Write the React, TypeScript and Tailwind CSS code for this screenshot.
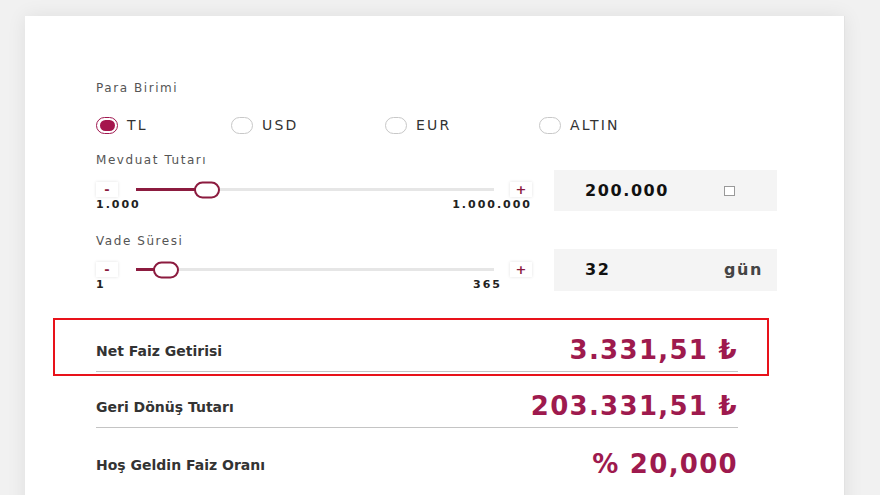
import React, { useState } from 'react';

const MAROON = '#9e1a4e';

function Radio({ label, checked, onClick, width }: { label: string; checked: boolean; onClick: () => void; width: string }) {
  return (
    <button type="button" onClick={onClick} className={`flex items-center gap-[9px] h-5 ${width}`}>
      <span
        className={
          checked
            ? 'w-[22px] h-[17px] rounded-full border-[1.5px] border-[#a0174f] flex items-center justify-center'
            : 'w-[22px] h-[17px] rounded-full border border-[#c8c8c8] bg-white'
        }
      >
        {checked && <span className="w-[15px] h-[11px] rounded-full bg-[#a5154d]" />}
      </span>
      <span className="text-[14px] tracking-[0.16em] text-[#333]">{label}</span>
    </button>
  );
}

function StepButton({ sign }: { sign: string }) {
  return (
    <span className="w-[22px] h-[15px] flex items-center justify-center bg-white shadow-[0_0_3px_rgba(0,0,0,0.12)] text-[13px] font-bold leading-none text-[#8c1b3f]">
      {sign}
    </span>
  );
}

function Slider({
  min,
  max,
  value,
  minLabel,
  maxLabel,
  maxPad,
}: {
  min: number;
  max: number;
  value: number;
  minLabel: string;
  maxLabel: string;
  maxPad: string;
}) {
  const pct = ((value - min) / (max - min)) * 100;
  return (
    <div className="w-[436px]">
      <div className="flex items-center h-[15px]">
        <StepButton sign="-" />
        <div className="relative flex-1 ml-[18px] mr-[16px] h-[3px] bg-[#e6e6e6]">
          <div className="absolute left-0 top-0 h-[3px] bg-[#8c1b3f]" style={{ width: `${pct}%` }} />
          <span
            className="absolute top-1/2 -translate-x-1/2 -translate-y-1/2 w-[26px] h-[17px] rounded-full border-2 border-[#8c1b3f] bg-white"
            style={{ left: `${pct}%` }}
          />
        </div>
        <StepButton sign="+" />
      </div>
      <div className={`flex justify-between mt-[1px] h-[14px] items-center text-[11px] font-bold tracking-[0.18em] text-[#222] ${maxPad}`}>
        <span>{minLabel}</span>
        <span>{maxLabel}</span>
      </div>
    </div>
  );
}

function ResultRow({ label, value, line }: { label: string; value: string; line: boolean }) {
  return (
    <div>
      <div className="flex items-center justify-between h-[30px]">
        <span className="text-[14px] font-bold text-[#333] pt-[2px]">{label}</span>
        <span className="text-[26px] font-bold tracking-[0.05em] leading-[30px]" style={{ color: MAROON }}>
          {value}
        </span>
      </div>
      {line && <div className="mt-[6px] h-px bg-[#c4c4c4]" />}
    </div>
  );
}

const OPTIONS: { c: string; w: string }[] = [
  { c: 'TL', w: 'w-[135px]' },
  { c: 'USD', w: 'w-[154px]' },
  { c: 'EUR', w: 'w-[154px]' },
  { c: 'ALTIN', w: 'w-[154px]' },
];

export default function App() {
  const [currency, setCurrency] = useState('TL');

  return (
    <div className="min-h-screen bg-[#f1f1f1] overflow-hidden font-['DejaVu_Sans',sans-serif]">
      <div className="ml-[25px] mt-[16px] w-[820px] h-[600px] bg-white border-r border-[#e2e2e2] shadow-[0_0_18px_rgba(0,0,0,0.08)] pt-[64px] pl-[71px]">
        <div className="h-4 leading-4 text-[12px] tracking-[0.13em] text-[#555]">Para Birimi</div>

        <div className="mt-[19px] flex">
          {OPTIONS.map(({ c, w }) => (
            <Radio key={c} label={c} width={w} checked={currency === c} onClick={() => setCurrency(c)} />
          ))}
        </div>

        <div className="mt-[17px] h-4 leading-4 text-[12px] tracking-[0.13em] text-[#555]">Mevduat Tutarı</div>
        <div className="mt-[2px] flex items-start gap-[22px]">
          <div className="pt-[12px]">
            <Slider min={1000} max={1000000} value={200000} minLabel="1.000" maxLabel="1.000.000" maxPad="pr-0" />
          </div>
          <div className="w-[223px] h-[41px] bg-[#f4f4f4] flex items-center justify-between pl-[31px] pr-[42px]">
            <span className="text-[16px] font-bold tracking-[0.1em] text-[#111]">200.000</span>
            <span className="w-[11px] h-[10px] border border-[#999] bg-white" />
          </div>
        </div>

        <div className="mt-[21px] h-4 leading-4 text-[12px] tracking-[0.13em] text-[#555]">Vade Süresi</div>
        <div className="flex items-start gap-[22px]">
          <div className="pt-[13px]">
            <Slider min={1} max={365} value={32} minLabel="1" maxLabel="365" maxPad="pr-[30px]" />
          </div>
          <div className="w-[223px] h-[42px] bg-[#f4f4f4] flex items-center justify-between pl-[31px] pr-[14px]">
            <span className="text-[16px] font-bold tracking-[0.1em] text-[#111]">32</span>
            <span className="text-[16px] font-bold tracking-[0.1em] text-[#444]">gün</span>
          </div>
        </div>

        <div className="mt-[26px] -ml-[43px] w-[716px] border-2 border-[#e8121a] pt-[15px] pb-[2px] pl-[41px] pr-[29px]">
          <ResultRow label="Net Faiz Getirisi" value="3.331,51 ₺" line />
        </div>

        <div className="w-[642px]">
          <div className="mt-[15px]">
            <ResultRow label="Geri Dönüş Tutarı" value="203.331,51 ₺" line />
          </div>
          <div className="mt-[21px]">
            <ResultRow label="Hoş Geldin Faiz Oranı" value="% 20,000" line={false} />
          </div>
        </div>
      </div>
    </div>
  );
}
